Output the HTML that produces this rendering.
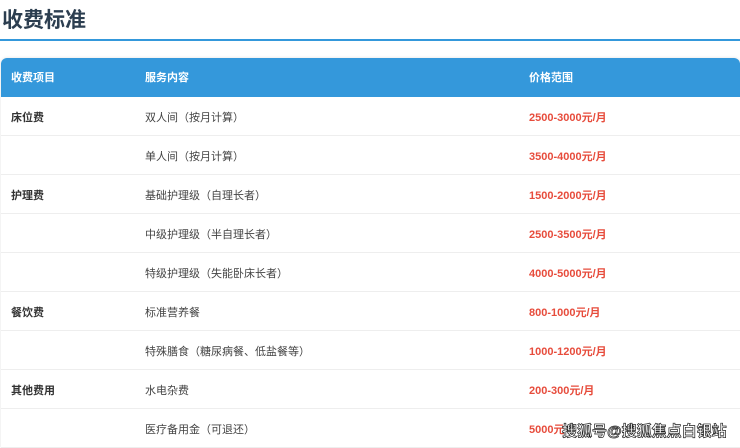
<!DOCTYPE html>
<html><head><meta charset="utf-8"><style>
body{margin:0;width:740px;height:446px;overflow:hidden;background:#fff;font-family:"Liberation Sans","Noto Sans CJK SC",sans-serif;position:relative}
h1{position:absolute;left:2px;top:4px;margin:0;font-size:21px;font-weight:bold;color:#2c3e50}
.line{position:absolute;left:0;top:39px;width:740px;height:2px;background:#3498db}
.tbl{position:absolute;left:1px;top:58px;width:739px;border-radius:6px 6px 0 0;overflow:hidden;box-shadow:0 0 3px rgba(0,0,0,.12)}
.row{height:39px;position:relative;border-bottom:1px solid #eee;box-sizing:border-box;font-size:11px;color:#444}
.row span{position:absolute;top:2px;line-height:38px}
.c1{left:10px;font-weight:bold;color:#333}
.c2{left:144px}
.c3{left:528px;font-weight:bold;color:#e74c3c}
.hd{background:#3498db;border:none}
.hd span{color:#fff;font-weight:bold;top:1px}
.wm{position:absolute;left:562px;top:420px;font-size:15px;font-weight:bold;color:#fff;-webkit-text-stroke:0.7px #222;white-space:nowrap}
</style></head><body>
<h1>收费标准</h1>
<div class="line"></div>
<div class="tbl">
<div class="row hd"><span class="c1">收费项目</span><span class="c2">服务内容</span><span class="c3" style="color:#fff">价格范围</span></div>
<div class="row"><span class="c1">床位费</span><span class="c2">双人间（按月计算）</span><span class="c3">2500-3000元/月</span></div>
<div class="row"><span class="c2">单人间（按月计算）</span><span class="c3">3500-4000元/月</span></div>
<div class="row"><span class="c1">护理费</span><span class="c2">基础护理级（自理长者）</span><span class="c3">1500-2000元/月</span></div>
<div class="row"><span class="c2">中级护理级（半自理长者）</span><span class="c3">2500-3500元/月</span></div>
<div class="row"><span class="c2">特级护理级（失能卧床长者）</span><span class="c3">4000-5000元/月</span></div>
<div class="row"><span class="c1">餐饮费</span><span class="c2">标准营养餐</span><span class="c3">800-1000元/月</span></div>
<div class="row"><span class="c2">特殊膳食（糖尿病餐、低盐餐等）</span><span class="c3">1000-1200元/月</span></div>
<div class="row"><span class="c1">其他费用</span><span class="c2">水电杂费</span><span class="c3">200-300元/月</span></div>
<div class="row"><span class="c2">医疗备用金（可退还）</span><span class="c3">5000元</span></div>
</div>
<div class="wm">搜狐号@搜狐焦点白银站</div>
</body></html>
